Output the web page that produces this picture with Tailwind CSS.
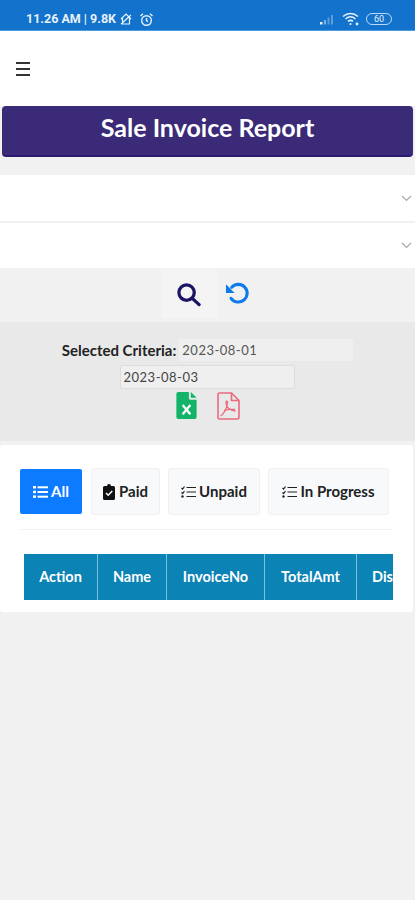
<!DOCTYPE html>
<html lang="en">
<head>
    <meta charset="UTF-8">
    <meta name="viewport" content="width=device-width, initial-scale=1.0">
    <title>Sale Invoice Report</title>
    <script src="https://cdn.jsdelivr.net/npm/@tailwindcss/browser@4"></script>
</head>
<body class="bg-[#f1f1f1] h-[900px] overflow-hidden font-['Lato','Noto_Sans',sans-serif] text-[#212529]">
    <!-- status bar -->
    <div class="h-[31px] bg-[#1272cc] border-b border-[#4a9be0] flex items-center justify-between pl-[26px] pr-[23px] pt-[8px] text-white">
        <div class="flex items-center gap-[3px] text-[12.5px] font-bold font-['Roboto',sans-serif] whitespace-nowrap opacity-90">
            <span>11.26 AM | 9.8K</span>
            <svg class="w-[14px] h-[14px]" viewBox="0 0 14 14" fill="none" stroke="currentColor" stroke-width="1.2"><path d="M2 7 7 2l5 5M3.5 6v6h7V6M2 12 12 3"/></svg>
            <svg class="w-[15px] h-[15px] ml-[3px]" viewBox="0 0 15 15" fill="none" stroke="currentColor" stroke-width="1.4"><circle cx="7.5" cy="8.5" r="4.8"/><path d="M7.5 6v2.7l1.6 1M1.5 4 4 1.7M13.5 4 11 1.700"/></svg>
        </div>
        <div class="flex items-center gap-[6px] opacity-90">
            <svg class="w-[16px] h-[12px]" viewBox="0 0 16 12"><rect x="0" y="9" width="2.500" height="2.500" fill="#fff"/><rect x="4" y="7" width="2" height="4.500" fill="#fff" opacity=".5"/><rect x="7.500" y="4.500" width="2" height="7" fill="#fff" opacity=".35"/><rect x="11" y="2" width="2" height="9.500" fill="#fff" opacity=".35"/></svg>
            <svg class="w-[18px] h-[14px]" viewBox="0 0 18 14" fill="none" stroke="#fff" stroke-width="1.500"><path d="M1 4.500C5.500.6 11.500.6 16 4.500M3.500 7c3-2.600 7-2.600 10 0M6 9.400c1.600-1.300 3.400-1.300 5 0"/><circle cx="8.500" cy="12" r="1.100" fill="#fff" stroke="none"/><circle cx="15" cy="12" r="1.400" fill="#fff" stroke="none"/></svg>
            <div class="w-[26px] h-[12px] rounded-full border border-white/80 flex items-center justify-center text-[9px] leading-none font-['Roboto',sans-serif]">60</div>
        </div>
    </div>

    <!-- top nav -->
    <div class="h-[75px] bg-white flex items-start pl-[16px] pt-[31px]">
        <div class="w-[14px] flex flex-col gap-[4px]">
            <div class="h-[2px] bg-[#333]"></div>
            <div class="h-[2px] bg-[#333]"></div>
            <div class="h-[2px] bg-[#333]"></div>
        </div>
    </div>

    <!-- page title -->
    <div class="h-[51px] mx-[2px] bg-[#3a2a78] border-b-2 border-[#2a1a70] rounded-[4px] flex items-center justify-center text-white text-[25px] font-bold pb-[6px]">Sale Invoice Report</div>

    <!-- filters -->
    <div class="mt-[18px] flex flex-col gap-[2px]">
        <div class="h-[46px] bg-white flex items-center justify-end pr-[3px]">
            <svg class="w-[11px] h-[7px]" viewBox="0 0 11 7" fill="none" stroke="#a8a8a8" stroke-width="1.200"><path d="m1 1 4.500 4.500L10 1"/></svg>
        </div>
        <div class="h-[45px] bg-white flex items-center justify-end pr-[3px]">
            <svg class="w-[11px] h-[7px]" viewBox="0 0 11 7" fill="none" stroke="#a8a8a8" stroke-width="1.200"><path d="m1 1 4.500 4.500L10 1"/></svg>
        </div>
    </div>

    <!-- search / reset -->
    <div class="h-[54px] flex items-start justify-center gap-[7px] pt-[1px] pr-[3px]">
        <div class="h-[49px] bg-[#f4f4f4] pl-[14px] pr-[17px] pt-[13px]">
            <svg class="w-[25px] h-[25px]" viewBox="0 0 26 26" fill="none" stroke="#1c1464" stroke-width="3.400" stroke-linecap="round"><circle cx="11" cy="11" r="8"/><path d="m17.500 17.500 6.500 6"/></svg>
        </div>
        <svg class="w-[25px] h-[25px] mt-[12px]" viewBox="0 0 26 26" fill="none"><path d="M7 6.500A9.200 9.200 0 1 1 6.300 18" stroke="#0f7bea" stroke-width="3.200" stroke-linecap="round"/><path d="M1 3.500v9h9z" fill="#0f7bea"/></svg>
    </div>

    <!-- selected criteria -->
    <div class="h-[119px] bg-[#e9e9e9] pt-[16px]">
        <div class="flex items-center justify-center h-[24px]">
            <span class="font-bold text-[15px] text-[#222] mr-[3px]">Selected Criteria:</span>
            <div class="w-[174px] h-[22px] bg-[#efefef] px-[3px] text-[13px] leading-[22px] text-[#555] tracking-[0.5px]">2023-08-01</div>
        </div>
        <div class="flex justify-center mt-[3px] pr-[1px]">
            <div class="w-[175px] h-[24px] bg-[#efefef] border border-[#ddd] rounded-[2px] px-[3px] text-[13px] leading-[22px] text-[#444] tracking-[0.5px]">2023-08-03</div>
        </div>
        <div class="flex justify-center gap-[20px] mt-[3px] pl-[1px]">
            <svg class="w-[21px] h-[27px]" viewBox="0 0 21 28"><path d="M2 0h11v6.500a1.500 1.500 0 0 0 1.500 1.500H21v18a2 2 0 0 1-2 2H2a2 2 0 0 1-2-2V2a2 2 0 0 1 2-2z" fill="#12b469"/><path d="M15 0l6 6h-6z" fill="#12b469"/><path d="m6.500 13.500 8 9.500m0-9.500-8 9.500" stroke="#fff" stroke-width="2.400"/></svg>
            <svg class="w-[23px] h-[28px]" viewBox="0 0 23 28" fill="none" stroke="#ea6a7c" stroke-width="1.600"><path d="M2.500 1h12l7.500 7.500V25a2 2 0 0 1-2 2H2.500a1.500 1.500 0 0 1-1.500-1.500v-23A1.500 1.500 0 0 1 2.500 1z"/><path d="M14.500 1v7.500H22"/><path d="M3.500 24c3-1.500 6-7 7-12.500.5-3-2-3-1.500 0 .7 4 4 7 9.500 7.500" stroke-width="1.300"/><path d="M7 18.500c3-1 7-1.500 11-1" stroke-width="1.300"/></svg>
        </div>
    </div>

    <!-- invoices card -->
    <div class="mt-[4px] mr-[2px] h-[167px] bg-white rounded-[3px] pt-[24px] pl-[20px] pr-[21px]">
        <div class="flex items-start gap-[8px] pb-[15px] border-b border-[#f3f3f3] text-[15px] font-bold h-[61px]">
            <div class="w-[62px] h-[45px] bg-[#0d7bff] rounded-[2px] text-white flex items-center justify-center gap-[3px] mr-px">
                <svg class="w-[15px] h-[12px]" viewBox="0 0 15 12" fill="#fff"><rect x="0" y="0" width="3" height="2.500"/><rect x="0" y="4.700" width="3" height="2.500"/><rect x="0" y="9.400" width="3" height="2.500"/><rect x="4.500" y=".3" width="10.500" height="2"/><rect x="4.500" y="5" width="10.500" height="2"/><rect x="4.500" y="9.700" width="10.500" height="2"/></svg>
                All
            </div>
            <div class="w-[69px] h-[47px] -mt-[1px] bg-[#f8f9fa] border border-[#f1f1f1] rounded-[3px] text-[#222] flex items-center justify-center gap-[4px]">
                <svg class="w-[12px] h-[16px]" viewBox="0 0 12 16"><path d="M1.500 2H4a2 2 0 0 1 4 0h2.500A1.500 1.500 0 0 1 12 3.500v11a1.500 1.500 0 0 1-1.500 1.500h-9A1.500 1.500 0 0 1 0 14.500v-11A1.500 1.500 0 0 1 1.500 2z" fill="#111"/><path d="m3 9 2.200 2.200L9.300 7" stroke="#fff" stroke-width="1.500" fill="none"/></svg>
                Paid
            </div>
            <div class="w-[92px] h-[47px] -mt-[1px] bg-[#f8f9fa] border border-[#f1f1f1] rounded-[3px] text-[#222] flex items-center justify-center gap-[3px]">
                <svg class="w-[15px] h-[12px]" viewBox="0 0 15 12" fill="none" stroke="#222" stroke-width="1.200"><path d="M.5 2 1.600 3 3.500.5M.5 6.500 1.600 7.500 3.500 5M5.500 1.500H15M5.500 6H15M5.500 10.500H15"/><circle cx="1.500" cy="10.500" r="1.200" fill="#222" stroke="none"/></svg>
                Unpaid
            </div>
            <div class="w-[121px] h-[47px] -mt-[1px] bg-[#f8f9fa] border border-[#f1f1f1] rounded-[3px] text-[#222] flex items-center justify-center gap-[3px] whitespace-nowrap">
                <svg class="w-[15px] h-[12px]" viewBox="0 0 15 12" fill="none" stroke="#222" stroke-width="1.200"><path d="M.5 2 1.600 3 3.500.5M.5 6.500 1.600 7.500 3.500 5M5.500 1.500H15M5.500 6H15M5.500 10.500H15"/><circle cx="1.500" cy="10.500" r="1.200" fill="#222" stroke="none"/></svg>
                In Progress
            </div>
        </div>
        <!-- table header, cut off on the right -->
        <div class="mt-[24px] ml-[4px] w-[369px] h-[46px] overflow-hidden bg-[#0b83b5] flex text-white text-[14.5px] font-bold">
            <div class="w-[74px] shrink-0 border-r border-[#7cc0dc] flex items-center justify-center">Action</div>
            <div class="w-[69px] shrink-0 border-r border-[#7cc0dc] flex items-center justify-center">Name</div>
            <div class="w-[98px] shrink-0 border-r border-[#7cc0dc] flex items-center justify-center">InvoiceNo</div>
            <div class="w-[92px] shrink-0 border-r border-[#7cc0dc] flex items-center justify-center">TotalAmt</div>
            <div class="w-[60px] shrink-0 pl-[15px] flex items-center">Discount</div>
        </div>
    </div>
</body>
</html>
